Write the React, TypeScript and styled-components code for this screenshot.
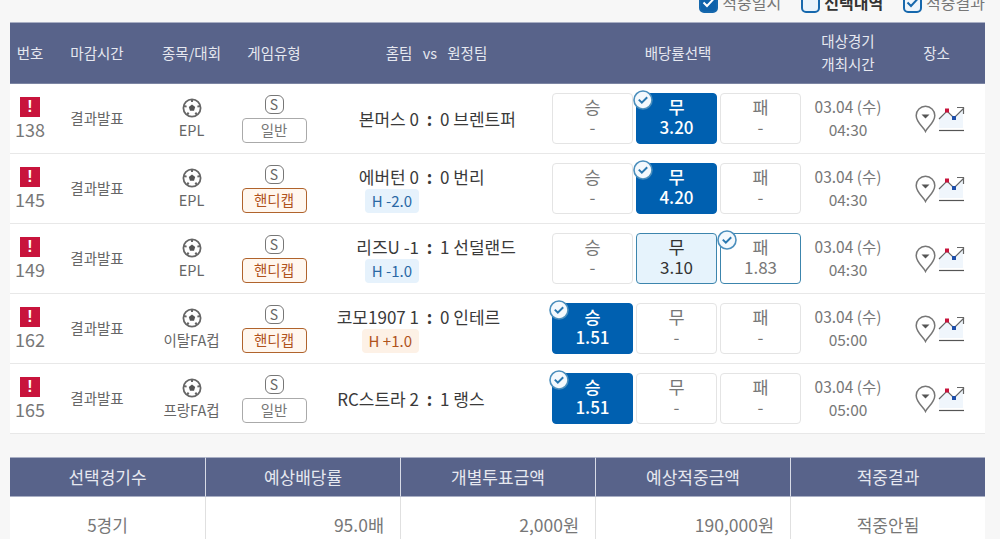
import React from 'react';
import styled, { createGlobalStyle } from 'styled-components';

const GlobalStyle = createGlobalStyle`
  html, body {
    margin: 0;
    height: 539px;
    overflow: hidden;
    background: #f7f7f7;
    font-family: "Noto Sans CJK KR", "Noto Sans", sans-serif;
    color: #666;
  }
  * { box-sizing: border-box; }
`;

const Page = styled.div`
  width: 975px;
  margin-left: 10px;
`;

const Legend = styled.div`
  height: 22px;
  overflow: hidden;
  display: flex;
  justify-content: flex-end;
  align-items: flex-start;
  gap: 20px;
`;

const LegendItem = styled.div<{ $bold?: boolean }>`
  display: flex;
  align-items: center;
  gap: 4px;
  height: 22px;
  margin-top: -9px;
  font-size: 16px;
  line-height: 22px;
  white-space: nowrap;
  font-weight: ${(p) => (p.$bold ? 700 : 400)};
  color: ${(p) => (p.$bold ? '#333' : '#777')};
`;

const LegendBox = styled.span<{ $mode: 'filled' | 'empty' | 'line' }>`
  width: 19px;
  height: 21px;
  border-radius: 5px;
  display: flex;
  align-items: center;
  justify-content: center;
  border: 2px solid #1668ad;
  background: ${(p) => (p.$mode === 'filled' ? '#0f62aa' : p.$mode === 'empty' ? '#e9f3fb' : '#eef5fb')};
`;

const GRID = '40px 94px 95px 70px 239px 260px 80px 97px';

const HeadRow = styled.div`
  display: grid;
  grid-template-columns: ${GRID};
  height: 62px;
  background: #58638a;
  border-top: 1px solid #a9afc4;
  border-bottom: 1px solid #7c85a3;
  color: #e6e8f0;
  font-size: 14.5px;
`;

const HeadCell = styled.div<{ $shift?: number }>`
  display: flex;
  align-items: center;
  justify-content: center;
  text-align: center;
  line-height: 23px;
  padding-bottom: 2px;
  padding-left: ${(p) => p.$shift ?? 0}px;
`;

const MatchupTitle = styled.span`
  word-spacing: 7px;
`;

const Row = styled.div`
  display: grid;
  grid-template-columns: ${GRID};
  height: 70px;
  background: #fff;
  border-bottom: 1px solid #e8e8e8;
`;

const Cell = styled.div`
  display: flex;
  flex-direction: column;
  align-items: center;
  justify-content: center;
`;

const Alert = styled.span`
  width: 20px;
  height: 20px;
  background: #c8143c;
  color: #fff;
  font-family: "Liberation Sans", sans-serif;
  font-weight: 700;
  font-size: 16px;
  line-height: 20px;
  text-align: center;
`;

const NumberText = styled.div`
  font-size: 18px;
  line-height: 24px;
  color: #777;
`;

const Deadline = styled.div`
  font-size: 14.5px;
  color: #666;
  margin-top: -2px;
`;

const LeagueName = styled.div`
  font-size: 14.5px;
  line-height: 18px;
  color: #666;
  margin-top: 3px;
`;

const SBadge = styled.span`
  width: 19px;
  height: 19px;
  border: 1px solid #777;
  border-radius: 6px;
  font-size: 14px;
  line-height: 16px;
  text-align: center;
  color: #666;
`;

const TypePill = styled.span<{ $orange?: boolean }>`
  width: 65px;
  height: 25px;
  margin-top: 4px;
  border-radius: 4px;
  border: 1px solid ${(p) => (p.$orange ? '#b0632c' : '#aaa')};
  background: ${(p) => (p.$orange ? '#fff7ef' : '#fff')};
  color: ${(p) => (p.$orange ? '#b0531c' : '#777')};
  font-size: 14.5px;
  line-height: 22px;
  text-align: center;
`;

const TeamCell = styled.div`
  display: grid;
  grid-template-columns: 110px 21px 1fr;
  align-content: center;
  font-size: 17px;
  line-height: 24px;
  color: #3a3a3a;
  white-space: nowrap;
`;

const Home = styled.div`
  justify-self: end;
`;

const Colon = styled.div`
  text-align: center;
  font-weight: 700;
`;

const Handicap = styled.span<{ $orange?: boolean }>`
  grid-column: 1;
  justify-self: end;
  height: 24px;
  padding: 0 7px;
  border-radius: 4px;
  font-size: 15px;
  line-height: 24px;
  background: ${(p) => (p.$orange ? '#fdf1e6' : '#e6f2fc')};
  color: ${(p) => (p.$orange ? '#b0531c' : '#2a68a5')};
`;

const OddsCell = styled.div`
  display: flex;
  gap: 3px;
  padding: 9px 0 0 4px;
`;

type OddsState = 'plain' | 'active' | 'picked' | 'outlined';

const OddsButton = styled.div<{ $state: OddsState }>`
  position: relative;
  width: 81px;
  height: 51px;
  padding-bottom: 3px;
  border-radius: 4px;
  display: flex;
  flex-direction: column;
  align-items: center;
  justify-content: center;
  border: 1px solid
    ${(p) => (p.$state === 'active' ? '#0060b0' : p.$state === 'plain' ? '#e4e4e4' : '#3c85ad')};
  background: ${(p) => (p.$state === 'active' ? '#0060b0' : p.$state === 'picked' ? '#e6f3fc' : '#fff')};
  color: ${(p) => (p.$state === 'active' ? '#fff' : p.$state === 'picked' ? '#333' : '#777')};
  font-weight: ${(p) => (p.$state === 'active' ? 500 : 400)};
`;

const OddsLabel = styled.div`
  font-size: 17.5px;
  line-height: 20px;
`;

const OddsValue = styled.div`
  font-size: 17px;
  line-height: 20px;
`;

const CheckBadge = styled.span`
  position: absolute;
  left: -4px;
  top: -4px;
  display: flex;
`;

const TimeCell = styled.div`
  display: flex;
  flex-direction: column;
  align-items: center;
  justify-content: center;
  padding-bottom: 2px;
  font-size: 15.5px;
  line-height: 23px;
  color: #777;
`;

const VenueCell = styled.div`
  display: flex;
  align-items: center;
  justify-content: center;
  gap: 2px;
  padding-left: 7px;
`;

const Summary = styled.div`
  margin-top: 23px;
  display: grid;
  grid-template-columns: repeat(5, 195px);
`;

const SummaryHead = styled.div`
  height: 40px;
  background: #58638a;
  border-top: 1px solid #a9afc4;
  border-bottom: 1px solid #a9afc4;
  border-left: 1px solid #d8dbe6;
  color: #e6e8f0;
  font-size: 17px;
  line-height: 37px;
  text-align: center;
  &:first-child { border-left: 0; }
`;

const SummaryCell = styled.div<{ $right?: boolean; $first?: boolean }>`
  height: 60px;
  background: #fff;
  border-left: ${(p) => (p.$first ? '0' : '1px solid #e0e0e0')};
  font-size: ${(p) => (p.$right ? '17.5px' : '17px')};
  line-height: 56px;
  color: #777;
  text-align: ${(p) => (p.$right ? 'right' : 'center')};
  padding-right: ${(p) => (p.$right ? '16px' : '0')};
`;

const Tick = ({ color }: { color: string }) => (
  <svg width="13" height="11" viewBox="0 0 13 11">
    <path d="M1.5 5.5l3.5 3.5 6.5-7" fill="none" stroke={color} strokeWidth="2" />
  </svg>
);

const CheckMark = () => (
  <svg width="20" height="20" viewBox="0 0 20 20">
    <circle cx="10" cy="10" r="9" fill="#f4f9fd" stroke="#4b8fbd" strokeWidth="1.6" />
    <path d="M5.8 9.6l3 3 5.4-5.4" fill="none" stroke="#2a78b0" strokeWidth="2" />
  </svg>
);

const Ball = () => (
  <svg width="20" height="20" viewBox="0 0 20 20">
    <circle cx="10" cy="10" r="8.6" fill="#fff" stroke="#666" strokeWidth="1.8" />
    <path d="M10 6.6l3.2 2.3-1.2 3.8H8L6.8 8.9z" fill="#555" />
    <path d="M10 1.6v2.4M18 8l-2.6.6M15 17l-1.6-2.4M5 17l1.6-2.4M2 8l2.6.6" stroke="#666" strokeWidth="2" />
  </svg>
);

const Pin = () => (
  <svg width="21" height="28" viewBox="0 0 21 28">
    <path
      d="M10.5 26.5C8 21.5 1.2 17.5 1.2 10.6a9.3 9.3 0 0 1 18.6 0c0 6.9-6.8 10.9-9.3 15.9z"
      fill="#fff"
      stroke="#777"
      strokeWidth="1.5"
    />
    <path d="M6.5 9.5h8l-4 4z" fill="#555" />
  </svg>
);

const Trend = () => (
  <svg width="27" height="27" viewBox="0 0 27 27">
    <path d="M1 14L9 6l7 7 9-9v19H1z" fill="#f0f6fc" />
    <path d="M1 14L9 6l7 7 10-10M19 2.5h6.5V9" fill="none" stroke="#666" strokeWidth="1.2" />
    <rect x="7" y="3.5" width="4" height="4" fill="#c8143c" />
    <rect x="14" y="11" width="4" height="4" fill="#1f4fa8" />
    <path d="M1 25.5h25" stroke="#555" strokeWidth="1.2" />
  </svg>
);

type Match = {
  no: number;
  league: string;
  type: '일반' | '핸디캡';
  home: string;
  away: string;
  handicap?: string;
  odds: { label: string; value: string; state: OddsState; check?: boolean }[];
  time: string;
};

const plain = (label: string) => ({ label, value: '-', state: 'plain' as OddsState });

const matches: Match[] = [
  {
    no: 138,
    league: 'EPL',
    type: '일반',
    home: '본머스 0',
    away: '0 브렌트퍼',
    odds: [plain('승'), { label: '무', value: '3.20', state: 'active', check: true }, plain('패')],
    time: '04:30',
  },
  {
    no: 145,
    league: 'EPL',
    type: '핸디캡',
    home: '에버턴 0',
    away: '0 번리',
    handicap: 'H -2.0',
    odds: [plain('승'), { label: '무', value: '4.20', state: 'active', check: true }, plain('패')],
    time: '04:30',
  },
  {
    no: 149,
    league: 'EPL',
    type: '핸디캡',
    home: '리즈U -1',
    away: '1 선덜랜드',
    handicap: 'H -1.0',
    odds: [
      plain('승'),
      { label: '무', value: '3.10', state: 'picked' },
      { label: '패', value: '1.83', state: 'outlined', check: true },
    ],
    time: '04:30',
  },
  {
    no: 162,
    league: '이탈FA컵',
    type: '핸디캡',
    home: '코모1907 1',
    away: '0 인테르',
    handicap: 'H +1.0',
    odds: [{ label: '승', value: '1.51', state: 'active', check: true }, plain('무'), plain('패')],
    time: '05:00',
  },
  {
    no: 165,
    league: '프랑FA컵',
    type: '일반',
    home: 'RC스트라 2',
    away: '1 랭스',
    odds: [{ label: '승', value: '1.51', state: 'active', check: true }, plain('무'), plain('패')],
    time: '05:00',
  },
];

const App = () => {
  return (
    <Page>
      <GlobalStyle />
      <Legend>
        <LegendItem>
          <LegendBox $mode="filled">
            <Tick color="#fff" />
          </LegendBox>
          적중일시
        </LegendItem>
        <LegendItem $bold>
          <LegendBox $mode="empty" />
          선택내역
        </LegendItem>
        <LegendItem>
          <LegendBox $mode="line">
            <Tick color="#1668ad" />
          </LegendBox>
          적중결과
        </LegendItem>
      </Legend>

      <HeadRow>
        <HeadCell>번호</HeadCell>
        <HeadCell>마감시간</HeadCell>
        <HeadCell>종목/대회</HeadCell>
        <HeadCell>게임유형</HeadCell>
        <HeadCell $shift={16}>
          <MatchupTitle>홈팀 vs 원정팀</MatchupTitle>
        </HeadCell>
        <HeadCell>배당률선택</HeadCell>
        <HeadCell>
          대상경기
          <br />
          개최시간
        </HeadCell>
        <HeadCell>장소</HeadCell>
      </HeadRow>

      {matches.map((m) => (
        <Row key={m.no}>
          <Cell>
            <Alert>!</Alert>
            <NumberText>{m.no}</NumberText>
          </Cell>
          <Cell>
            <Deadline>결과발표</Deadline>
          </Cell>
          <Cell>
            <Ball />
            <LeagueName>{m.league}</LeagueName>
          </Cell>
          <Cell>
            <SBadge>S</SBadge>
            <TypePill $orange={m.type === '핸디캡'}>{m.type}</TypePill>
          </Cell>
          <TeamCell>
            <Home>{m.home}</Home>
            <Colon>:</Colon>
            <div>{m.away}</div>
            {m.handicap && <Handicap $orange={m.handicap.includes('+')}>{m.handicap}</Handicap>}
          </TeamCell>
          <OddsCell>
            {m.odds.map((o) => (
              <OddsButton key={o.label} $state={o.state}>
                {o.check && (
                  <CheckBadge>
                    <CheckMark />
                  </CheckBadge>
                )}
                <OddsLabel>{o.label}</OddsLabel>
                <OddsValue>{o.value}</OddsValue>
              </OddsButton>
            ))}
          </OddsCell>
          <TimeCell>
            <div>03.04 (수)</div>
            <div>{m.time}</div>
          </TimeCell>
          <VenueCell>
            <Pin />
            <Trend />
          </VenueCell>
        </Row>
      ))}

      <Summary>
        <SummaryHead>선택경기수</SummaryHead>
        <SummaryHead>예상배당률</SummaryHead>
        <SummaryHead>개별투표금액</SummaryHead>
        <SummaryHead>예상적중금액</SummaryHead>
        <SummaryHead>적중결과</SummaryHead>
        <SummaryCell $first>5경기</SummaryCell>
        <SummaryCell $right>95.0배</SummaryCell>
        <SummaryCell $right>2,000원</SummaryCell>
        <SummaryCell $right>190,000원</SummaryCell>
        <SummaryCell>적중안됨</SummaryCell>
      </Summary>
    </Page>
  );
};

export default App;
